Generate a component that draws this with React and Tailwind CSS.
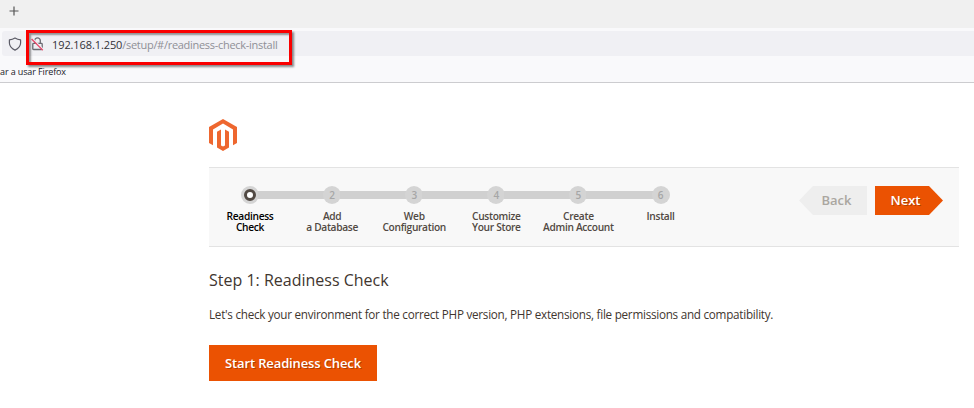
const STEPS = [
  ["Readiness", "Check"],
  ["Add", "a Database"],
  ["Web", "Configuration"],
  ["Customize", "Your Store"],
  ["Create", "Admin Account"],
  ["Install"],
];

function BrowserChrome() {
  return (
    <header className="relative h-[83px] border-b border-[#cccccf] bg-[#f9f9fb]">
      <div className="flex h-[28px] items-start bg-[#f0f0f0] pt-[6px] pl-[9px]">
        <svg width="10" height="10" viewBox="0 0 10 10" stroke="#555" strokeWidth="1.2">
          <path d="M5 .5v9M.5 5h9" />
        </svg>
      </div>
      <div className="mt-[3px] ml-[2px] flex h-[25px] items-center rounded-l-[3px] bg-[#f0f0f4] pl-[6px]">
        <svg width="14" height="14" viewBox="0 0 14 14" fill="none" stroke="#5b5b66" strokeWidth="1.2">
          <path d="M7 1 Q9.5 2.6 12.6 2.9 V6 Q12.4 10.8 7 13.1 Q1.6 10.8 1.4 6 V2.9 Q4.5 2.6 7 1Z" strokeLinejoin="round" />
        </svg>
        <svg className="ml-[9px]" width="13" height="14" viewBox="0 0 13 14" fill="none">
          <path d="M3.7 6V3.6a2.8 2.8 0 0 1 5.6 0V6M2.6 6.4h7.8q.8 0 .8.8v4.5q0 .8-.8.8H2.6q-.8 0-.8-.8V7.2q0-.8.8-.8z" stroke="#6a6a72" strokeWidth="1.3" />
          <path d="M1.2 1.2 12.4 12.4" stroke="#f0f0f4" strokeWidth="1.4" />
          <path d="M.6 2 11.8 13.2" stroke="#e84a6c" strokeWidth="1.3" />
        </svg>
        <span className="mt-[2px] ml-[8px] whitespace-nowrap font-['Open_Sans',sans-serif] text-[11px] leading-[16px] tracking-[-0.29px] text-[#8f8f96]">
          <span className="tracking-[-0.1px] text-[#303038]">192.168.1.250</span>/setup/#/readiness-check-install
        </span>
      </div>
      <div className="mt-[9px] whitespace-nowrap font-['Open_Sans',sans-serif] text-[9px] leading-[14px] tracking-[-0.12px] text-[#202028]">
        ar a usar Firefox
      </div>
      <div className="absolute top-[30px] left-[26px] h-[35px] w-[266px] border-3 border-[#fa0000] shadow-[2px_2px_2px_rgba(0,0,0,0.45),inset_2px_2px_2px_rgba(0,0,0,0.4)]" />
    </header>
  );
}

function Step({ lines, index }) {
  const active = index === 0;
  return (
    <li className="flex w-[82.1px] flex-col items-center">
      <div className="flex h-[19px] w-full items-center">
        <div className={active ? "h-[8px] flex-1" : "h-[8px] flex-1 bg-[#d0d0d0]"} />
        <div className="-mx-px flex size-[18px] items-center justify-center rounded-full bg-[#d4d4d4] text-[10px] leading-none font-semibold text-[#a6a6a6]">
          {active ? <span className="size-[12px] rounded-full border-3 border-[#514943] bg-white" /> : index + 1}
        </div>
        <div className={index === 5 ? "h-[8px] flex-1" : "h-[8px] flex-1 bg-[#d0d0d0]"} />
      </div>
      <div className={active
        ? "mt-[7px] text-center text-[10.2px] leading-[11px] font-semibold tracking-[-0.32px] whitespace-pre text-black"
        : "mt-[7px] text-center text-[10.2px] leading-[11px] font-semibold tracking-[-0.32px] whitespace-pre text-[#514943]"}>
        {lines.join("\n")}
      </div>
    </li>
  );
}

export default function App() {
  return (
    <div className="h-[408px] w-[974px] overflow-hidden bg-white font-['Open_Sans','Noto_Sans',sans-serif] text-[#41362f]">
      <BrowserChrome />
      <main className="ml-[209px] w-[750px] pt-[36px]">
        <svg width="28" height="32" viewBox="0 0 28 32" fill="#ee672f">
          <path d="M14 0 28 8v16l-4 2.3V10.4L14 4.6 4 10.4v15.9L0 24V8z" />
          <path d="M8 12.7 12 10.4V26.4l2 1.2 2-1.2V10.4l4 2.3v15.9L14 32l-6-3.4z" />
        </svg>
        <nav className="mt-[16px] flex h-[80px] items-start border-y border-[#e3e3e3] bg-[#f8f8f8] pt-[17px]">
          <ol className="flex">
            {STEPS.map((lines, i) => <Step key={i} lines={lines} index={i} />)}
          </ol>
          <div className="mt-[1px] mr-[16px] ml-auto flex gap-[8px] text-[13px] font-semibold">
            <button className="h-[29px] w-[68px] bg-[#eeeeee] pl-[7px] text-[#aaa6a0] [clip-path:polygon(14px_0,100%_0,100%_100%,14px_100%,0_50%)]">
              Back
            </button>
            <button className="h-[29px] w-[68px] bg-[#eb5202] pr-[7px] text-white [clip-path:polygon(0_0,54px_0,100%_50%,54px_100%,0_100%)] [text-shadow:1px_1px_0_rgba(0,0,0,0.25)]">
              Next
            </button>
          </div>
        </nav>
        <h1 className="mt-[21px] text-[16px] leading-[24px]">Step 1: Readiness Check</h1>
        <p className="mt-[13px] text-[11.7px] leading-[18px] tracking-[-0.26px] whitespace-nowrap">
          Let's check your environment for the correct PHP version, PHP extensions, file permissions and compatibility.
        </p>
        <button className="mt-[22px] h-[36px] w-[168px] bg-[#eb5202] pt-px text-[13px] font-semibold tracking-[-0.13px] whitespace-nowrap text-white [text-shadow:1px_1px_0_rgba(0,0,0,0.25)]">
          Start Readiness Check
        </button>
      </main>
    </div>
  );
}
